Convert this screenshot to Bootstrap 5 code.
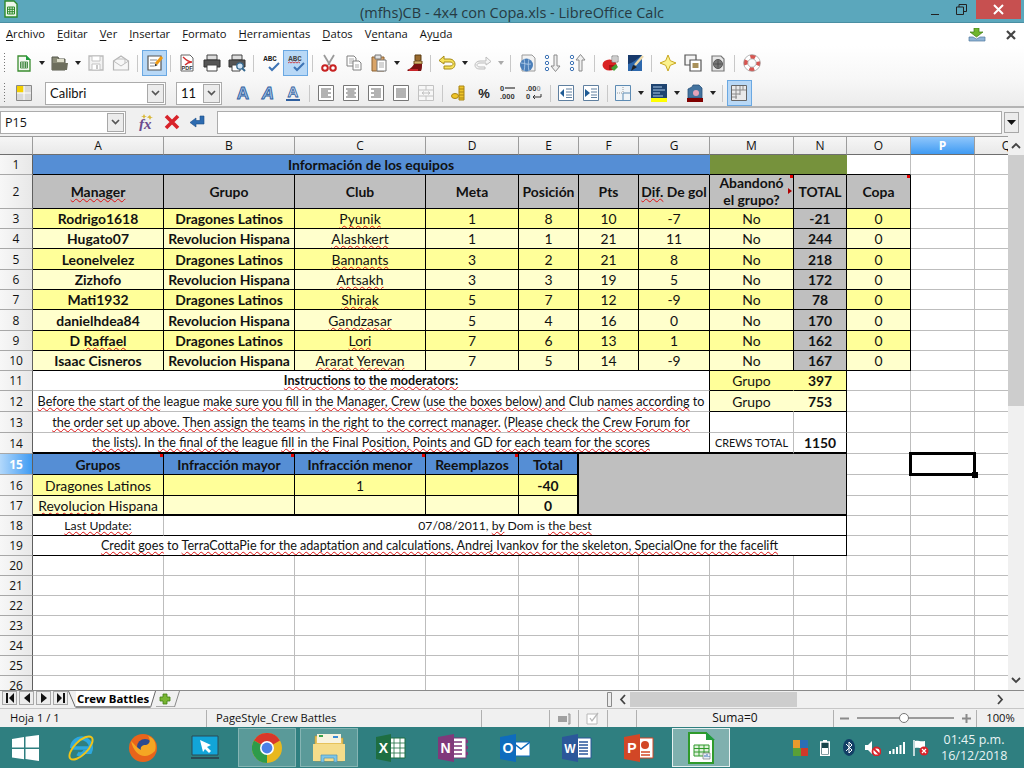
<!DOCTYPE html>
<html lang="es">
<head>
<meta charset="UTF-8">
<title>(mfhs)CB - 4x4 con Copa.xls - LibreOffice Calc</title>
<link href="https://cdn.jsdelivr.net/npm/bootstrap@5.3.0/dist/css/bootstrap.min.css" rel="stylesheet">
<style>
  html, body { margin: 0; background: #f0f0f0; overflow: hidden; }
  body { font-family: "Open Sans", "Noto Sans", sans-serif; font-size: 11.2px; color: #111; }
  svg { display: block; flex: none; }
  .app-win { width: 1024px; height: 768px; }

  .title-bar { height: 23px; background: #5ba7bc; border-bottom: 1px solid #4a8fa3; font-size: 14.5px; color: #263a42; }
  .title-text { left: 0; right: 0; top: 2px; text-align: center; }
  .win-btn { width: 27px; height: 19px; }
  .win-close { width: 45px; height: 19px; background: #c75050; margin: 0 3px 0 1px; }
  .menu-bar { height: 23px; background: #fff; padding-left: 6px; gap: 12px; font-size: 11.2px; }
  .menu-bar u { text-underline-offset: 2px; }
  .tool-a { height: 34px; background: linear-gradient(#fff, #f7f7f7); }
  .tool-b { height: 28px; background: linear-gradient(#f7f7f7, #ececec); border-bottom: 2px solid #b4b4b4; }
  .tb-grip { width: 11px; height: 20px; position: relative; }
  .tb-grip::before { content: ""; position: absolute; left: 4px; top: 0; width: 1px; height: 20px;
    background: repeating-linear-gradient(#777 0 1px, transparent 1px 3px); }
  .tb-b { width: 25px; height: 26px; display: flex; align-items: center; justify-content: center; }
  .tb-on { background: #b8d8f6; border: 1px solid #6aa8e2; }
  .tb-a { width: 11px; display: flex; justify-content: center; }
  .tb-a::before { content: ""; border: 3.5px solid transparent; border-top: 4px solid #222; border-bottom: 0; }
  .tb-a.is-off::before { border-top-color: #aaa; }
  .tb-s { width: 9px; height: 17px; display: flex; justify-content: center; }
  .tb-s::before { content: ""; width: 1px; background: #c8c8c8; }
  .tb-s7 { width: 7px; }
  .tb-s8 { width: 8px; }
  .tb-s6 { width: 6px; }
  .combo-box { height: 23px; background: #fff; border: 1px solid #acacac; padding-left: 4px; font-size: 13px; line-height: 21px; }
  .combo-font { width: 121px; margin-left: 9px; font-family: Lato, sans-serif; }
  .combo-size { width: 46px; margin: 0 8px 0 10px; font-family: Lato, sans-serif; }
  .combo-drop { width: 17px; height: 19px; margin: 1px; background: #ececec; border: 1px solid #a8a8a8; }

  .formula-bar { height: 28px; background: #f0f0f0; }
  .name-box { width: 126px; height: 23px; background: #fff; border: 1px solid #acacac; padding-left: 4px; line-height: 21px; font-size: 12.5px; }
  .formula-ic { width: 25px; }
  .formula-input { width: 785px; height: 23px; background: #fff; border: 1px solid #acacac; margin-left: 8px; }
  .formula-drop { width: 15px; height: 21px; margin-left: 2px; background: #ececec; border: 1px solid #a8a8a8; }

  .sheet-wrap { height: 554px; }
  .sheet-view { width: 1008px; height: 554px; overflow: hidden; background: #fff; }
  .sheet-tbl { table-layout: fixed; width: 1039px; border-collapse: separate; border-spacing: 0;
    font-family: Lato, sans-serif; font-size: 13.9px; color: #111; }
  .sheet-tbl td, .sheet-tbl th { height: 20px; padding: 0; text-align: center; vertical-align: middle; white-space: nowrap;
    overflow: hidden; line-height: 15px; font-weight: 400; border-right: 1px solid #bdbdbd; border-bottom: 1px solid #bdbdbd; }
  .sheet-tbl tr.row-21 td, .sheet-tbl tr.row-21 th { height: 21px; }
  .sheet-tbl tr.row-34 td, .sheet-tbl tr.row-34 th { height: 34px; }
  .sheet-tbl .col-head th { height: 19px; background: linear-gradient(#f6f6f6, #e9e9e9); border-top: 1px solid #9c9c9c;
    border-right-color: #9c9c9c; border-bottom-color: #6e6e6e; font-family: "Open Sans", sans-serif; font-size: 12px; }
  .sheet-tbl .row-head { background: linear-gradient(90deg, #f7f7f7, #e8e8e8); border-right: 1px solid #5f5f5f;
    border-bottom-color: #a8a8a8; font-family: "Open Sans", sans-serif; font-size: 12px; }
  .sheet-tbl .col-head .is-cur { background: linear-gradient(#8fc6fb, #3f9bf3); color: #fff; font-weight: 700; }
  .sheet-tbl .row-head.is-cur { background: linear-gradient(90deg, #b2d8fb, #3f9bf3); color: #fff; font-weight: 700; }

  .sheet-tbl td.ln { border-right-color: #000; border-bottom-color: #000; }
  .sheet-tbl td.lr { border-right-color: #000; }
  .sheet-tbl td.lb { border-bottom-color: #000; }
  .sheet-tbl td.thick-b { border-bottom: 2px solid #000; }
  .sheet-tbl td.thick-r { border-right: 2px solid #000; }
  .sheet-tbl td.b { font-weight: 700; }
  .sheet-tbl td.two-line { line-height: 16.500px; }
  .sheet-tbl td.note-txt { font-size: 12.6px; }
  .sheet-tbl td.note-sm { font-size: 12.2px; }
  .sheet-tbl td.small-cell { font-size: 10.9px; }
  .c-blue { background: #558ed5; }
  .c-olive { background: #76923c; }
  .c-gray { background: #bfbfbf; }
  .c-y1 { background: #ffff99; }
  .c-y2 { background: #ffffcc; }
  .sheet-tbl td.no-r1 { border-right-color: #ffff99; }
  .sheet-tbl td.no-r2 { border-right-color: #ffffcc; }
  .sheet-tbl td.edge-blue { border-right-color: #558ed5; }
  .sheet-tbl td.edge-olive { border-right-color: #76923c; }
  .sp { text-decoration: underline wavy #e01010 1px; text-underline-offset: 1px; text-decoration-skip-ink: none; }
  .has-note, .has-arrow { position: relative; }
  .has-note::after { content: ""; position: absolute; right: 0; top: 0; width: 3px; height: 3px; background: #e00000; }
  .has-arrow::before { content: ""; position: absolute; right: 1px; top: 13px; border: 3px solid transparent; border-left: 4px solid #b00000; border-right: 0; }
  .sheet-tbl td.cell-cursor { overflow: visible; position: relative; }
  .cell-cursor::after { content: ""; position: absolute; left: -2px; top: -2px; right: -2px; bottom: -2px; border: 3px solid #000; }
  .cell-cursor::before { content: ""; position: absolute; right: -4px; bottom: -4px; width: 6px; height: 6px; background: #000; z-index: 1; }

  .vscroll { width: 16px; background: #f0f0f0; }
  .vscroll-btn { height: 19px; }
  .vscroll-thumb { height: 251px; background: #cdcdcd; }

  .tab-bar { height: 18px; background: #f0f0f0; border-top: 1px solid #8a8a8a; }
  .tab-nav { width: 15px; height: 14px; margin-left: 2px; background: #ececec; border: 1px solid #a8a8a8; }
  .tab-name { font-weight: 700; font-size: 11.4px; width: 74px; white-space: nowrap; text-align: center; height: 17px; line-height: 15px; background: #fff; border-bottom: 2px solid #8a8a8a; color: #000; }
  .tab-add { height: 16px; width: 18px; background: #f0f0f0; border-bottom: 1px solid #aaa; }
  .hscroll { width: 417px; height: 17px; margin-left: auto; flex: none; padding-right: 20px; }
  .hscroll-left { margin: 0 3px 0 7px; }
  .hscroll-thumb { width: 167px; height: 15px; flex: none; background: #cdcdcd; margin-right: auto; }

  .status-bar { height: 19px; background: #f0f0f0; border-top: 1px solid #c6c6c6; font-size: 11.2px; }
  .st-cell { height: 17px; border-right: 1px solid #b0b0b0; line-height: 16px; flex: none; }
  .st-w1 { width: 207px; padding-left: 10px; }
  .st-w2 { width: 275px; padding-left: 9px; }
  .st-w3 { width: 68px; }
  .st-w4 { width: 29px; }
  .st-w5 { width: 197px; font-size: 12px; }
  .st-w6 { width: 143px; }
  .zoom-track { width: 97px; height: 2px; background: #9b9b9b; position: relative; }
  .zoom-knob { position: absolute; left: 42px; top: -4px; width: 10px; height: 10px; border-radius: 50%; background: #fff; border: 1px solid #777; }

  .task-bar { height: 41px; background: #2f7f80; color: #fff; }
  .task-start { width: 50px; }
  .task-item { width: 62px; height: 39px; display: flex; align-items: center; justify-content: center; }
  .task-open { background: #5a9a99; border: 1px solid #86b5b4; width: 58px; margin: 0 2px; }
  .task-current { background: #7fb0ae; border: 1px solid #e6f0f0; width: 58px; margin: 0 2px; }
  .tray-ic { width: 24px; display: flex; justify-content: center; }
  .task-clock { width: 66px; font-size: 12.5px; line-height: 16px; text-align: center; margin: 0 17px 0 8px; color: #e8f4f4; white-space: nowrap; }
</style>
</head>
<body>
<div class="app-win d-flex flex-column">

  <!-- title bar -->
  <div class="title-bar d-flex align-items-start position-relative">
    <svg class="ms-1 position-relative" width="14" height="18" viewBox="0 0 14 18"><path d="M1 1h9l3 3v13H1z" fill="#eef7ea" stroke="#2f8a2b" stroke-width="1.4"/><path d="M3.5 7h7v7h-7zM3.5 9.3h7M3.5 11.7h7M5.8 7v7M8.2 7v7" fill="none" stroke="#2f8a2b"/></svg>
    <div class="title-text position-absolute">(mfhs)CB - 4x4 con Copa.xls - LibreOffice Calc</div>
    <div class="ms-auto d-flex position-relative">
      <div class="win-btn d-flex align-items-center justify-content-center"><svg width="10" height="10" viewBox="0 0 10 10"><path d="M1 9h8v2H1z" fill="#222"/></svg></div>
      <div class="win-btn d-flex align-items-center justify-content-center"><svg width="11" height="11" viewBox="0 0 11 11"><path d="M.5 3h7v7.500h-7zM3 3V.5h7.500v7H8" fill="none" stroke="#222"/></svg></div>
      <div class="win-close d-flex align-items-center justify-content-center"><svg width="11" height="11" viewBox="0 0 11 11"><path d="M1 1l9 9M10 1l-9 9" stroke="#fff" stroke-width="2"/></svg></div>
    </div>
  </div>

  <!-- menu -->
  <div class="menu-bar d-flex align-items-center">
    <span><u>A</u>rchivo</span><span><u>E</u>ditar</span><span><u>V</u>er</span><span><u>I</u>nsertar</span><span><u>F</u>ormato</span><span><u>H</u>erramientas</span><span><u>D</u>atos</span><span>V<u>e</u>ntana</span><span>Ay<u>u</u>da</span>
    <svg class="ms-auto" width="18" height="14" viewBox="0 0 18 14"><path d="M6 0h5v4h4l-6.500 5L2 4h4z" fill="#6fb52c" stroke="#3d7a16" stroke-width=".7"/><path d="M1 9h4l3.500 2L12 9h5v4H1z" fill="#8fb4d6" stroke="#51799e" stroke-width=".7"/></svg>
    <svg class="ms-2 me-2" width="10" height="10" viewBox="0 0 10 10"><path d="M1 1l8 8M9 1L1 9" stroke="#444" stroke-width="2.200"/></svg>
  </div>

  <!-- standard toolbar -->
  <div class="tool-a d-flex align-items-center">
    <div class="tb-grip"></div>
    <div class="tb-b"><svg width="18" height="18" viewBox="0 0 18 18"><path d="M3 2h8l4 4v11H3z" fill="#f4f9f2" stroke="#3a8c2f" stroke-width="1.300"/><path d="M11 1l5 5h-5z" fill="#1f9c3c"/><path d="M5.500 8h7v6h-7zM5.500 10h7M5.500 12h7M8 8v6M10.500 8v6" fill="none" stroke="#2b7a2b" stroke-width=".8"/></svg></div>
    <div class="tb-a"></div>
    <div class="tb-b"><svg width="18" height="18" viewBox="0 0 18 18"><path d="M1 3h6l1 2h6v11H1z" fill="#8b8c78" stroke="#55564a"/><path d="M6 5h7v3H6z" fill="#dedecb"/><path d="M1 9h16l-1 7H1z" fill="#6d6e5d"/></svg></div>
    <div class="tb-a"></div>
    <div class="tb-b"><svg width="18" height="18" viewBox="0 0 18 18"><path d="M2 2h14v14H2z" fill="#f2f2f2" stroke="#bbb" stroke-width="1.300"/><path d="M5 2h8v5H5zM5 10h8v6H5z" fill="#fff" stroke="#c4c4c4"/><path d="M9 11h2v4H9z" fill="#c8c8c8"/></svg></div>
    <div class="tb-b"><svg width="18" height="18" viewBox="0 0 18 18"><path d="M1.500 7L9 2l7.500 5v9h-15z" fill="#f7f7f7" stroke="#b5b5b5" stroke-width="1.200"/><path d="M1.500 7L9 12l7.500-5M5 5h8v4" fill="none" stroke="#bdbdbd"/></svg></div>
    <div class="tb-s"></div>
    <div class="tb-b tb-on"><svg width="18" height="18" viewBox="0 0 18 18"><path d="M2 2h13v14H2z" fill="#fff" stroke="#555" stroke-width="1.200"/><path d="M4 6h7M4 9h5M4 12h4" stroke="#888"/><path d="M16 3l-6 7" stroke="#ef9a13" stroke-width="3"/><path d="M8.500 12.500l.8-3 2.200 1.800z" fill="#333"/></svg></div>
    <div class="tb-s tb-s7"></div>
    <div class="tb-b"><svg width="18" height="18" viewBox="0 0 18 18"><path d="M3 1h9l3 3v13H3z" fill="#fff" stroke="#666"/><path d="M5 3c3 3 6 5 9 5-3 0-5 1-7 3" fill="none" stroke="#d23030" stroke-width="1.300"/><text x="9" y="16" text-anchor="middle" font-family="Liberation Sans" font-weight="700" font-size="5.500" fill="#333">PDF</text></svg></div>
    <div class="tb-b"><svg width="18" height="18" viewBox="0 0 18 18"><path d="M4 1h10v5H4z" fill="#ddd" stroke="#444"/><path d="M1 6h16v7H1z" fill="#555" stroke="#333"/><path d="M4 11h10v6H4z" fill="#fff" stroke="#444"/></svg></div>
    <div class="tb-b"><svg width="18" height="18" viewBox="0 0 18 18"><path d="M4 1h10v5H4z" fill="#ddd" stroke="#444"/><path d="M1 6h16v7H1z" fill="#555" stroke="#333"/><path d="M4 11h8v6H4z" fill="#fff" stroke="#444"/><circle cx="12" cy="12" r="3.200" fill="#cfe4f6" stroke="#34688f" stroke-width="1.300"/><path d="M14 14l3 3" stroke="#34688f" stroke-width="2"/></svg></div>
    <div class="tb-s"></div>
    <div class="tb-b"><svg width="20" height="18" viewBox="0 0 20 18"><text x="9" y="7" text-anchor="middle" font-family="Liberation Mono" font-weight="700" font-size="7.500" fill="#222">ABC</text><path d="M8 13l3 3 7-7" fill="none" stroke="#3d73b5" stroke-width="2"/></svg></div>
    <div class="tb-b tb-on"><svg width="20" height="18" viewBox="0 0 20 18"><text x="9" y="7" text-anchor="middle" font-family="Liberation Mono" font-weight="700" font-size="7.500" fill="#444">ABC</text><path d="M2 9l1.500-1 1.500 1 1.500-1 1.500 1 1.500-1 1.500 1 1.500-1 1.500 1" fill="none" stroke="#d02020" stroke-width=".8"/><path d="M8 13l3 3 7-7" fill="none" stroke="#3d73b5" stroke-width="2"/></svg></div>
    <div class="tb-s tb-s8"></div>
    <div class="tb-b"><svg width="18" height="18" viewBox="0 0 18 18"><path d="M4 1l6 10M14 1L8 11" stroke="#9a9a9a" stroke-width="1.800"/><circle cx="5" cy="14" r="2.800" fill="#fff" stroke="#c72222" stroke-width="2"/><circle cx="13" cy="14" r="2.800" fill="#fff" stroke="#c72222" stroke-width="2"/></svg></div>
    <div class="tb-b"><svg width="18" height="18" viewBox="0 0 18 18"><path d="M2 2h7l2 2v8H2z" fill="#fff" stroke="#808080"/><path d="M4 5h5M4 7h5M4 9h5" stroke="#aaa"/><path d="M8 7h6l2 2v7H8z" fill="#fff" stroke="#808080"/><path d="M10 11h4M10 13h4" stroke="#aaa"/></svg></div>
    <div class="tb-b"><svg width="18" height="18" viewBox="0 0 18 18"><path d="M2 3h12v14H2z" fill="#d9a468" stroke="#8a6030"/><path d="M5 1h6v4H5z" fill="#e3e3e3" stroke="#777"/><path d="M7 6h9v11H7z" fill="#fff" stroke="#777"/><path d="M9 9h5M9 11h5M9 13h5" stroke="#aaa"/></svg></div>
    <div class="tb-a"></div>
    <div class="tb-b"><svg width="18" height="18" viewBox="0 0 18 18"><path d="M9 1h6v5l-3 2-3-2z" fill="#9a6b2f" stroke="#5b3c12"/><path d="M8 7h8v3H8z" fill="#d7b36c" stroke="#6f5222"/><path d="M1 16c2-1 4-1 7-6h8c0 3 0 5-1 7H2z" fill="#7a1212"/><path d="M3 15h9v2H3z" fill="#c9262b"/></svg></div>
    <div class="tb-s tb-s7"></div>
    <div class="tb-b"><svg width="18" height="18" viewBox="0 0 18 18"><path d="M6 2L1 6.500 6 10V8h6c2 0 3 1 3 2s-1 2-3 2H6v3h6c4 0 5-3 5-5s-2-5-5-5H6z" fill="#f7e35b" stroke="#a68a16"/></svg></div>
    <div class="tb-a"></div>
    <div class="tb-b"><svg width="18" height="18" viewBox="0 0 18 18"><path d="M12 3l5 4.500L12 11V9H6c-2 0-3 1-3 2s1 2 3 2h5v2H6c-4 0-5-2-5-4s2-4 5-4h6z" fill="#f4f4f4" stroke="#bdbdbd"/></svg></div>
    <div class="tb-a is-off"></div>
    <div class="tb-s"></div>
    <div class="tb-b"><svg width="18" height="18" viewBox="0 0 18 18"><path d="M3 1h10l3 3v13H3z" fill="#f2f2f2" stroke="#9a9a9a"/><circle cx="7.500" cy="11" r="6.500" fill="#4b7fb9"/><path d="M2 9c3 0 6 2 10 1M5 5c1 3 1 8 0 12M10 5c-1 3-1 8 0 12" fill="none" stroke="#b9d3ec" stroke-width=".8"/></svg></div>
    <div class="tb-b"><svg width="18" height="18" viewBox="0 0 18 18"><circle cx="3" cy="3" r="1.700" fill="#fff" stroke="#3d73b5"/><circle cx="3" cy="9" r="1.700" fill="#fff" stroke="#3d73b5"/><circle cx="3" cy="15" r="1.700" fill="#fff" stroke="#3d73b5"/><path d="M10 1h3v11h3l-4.500 5.500L7 12h3z" fill="#f0f0f0" stroke="#8a8a8a"/></svg></div>
    <div class="tb-b"><svg width="18" height="18" viewBox="0 0 18 18"><circle cx="3" cy="3" r="1.700" fill="#fff" stroke="#3d73b5"/><circle cx="3" cy="9" r="1.700" fill="#fff" stroke="#3d73b5"/><circle cx="3" cy="15" r="1.700" fill="#fff" stroke="#3d73b5"/><path d="M10 17h3V6h3L11.500.5 7 6h3z" fill="#f0f0f0" stroke="#8a8a8a"/></svg></div>
    <div class="tb-s tb-s8"></div>
    <div class="tb-b"><svg width="18" height="18" viewBox="0 0 18 18"><ellipse cx="7.500" cy="11" rx="7" ry="5.500" fill="#d92222"/><path d="M7 16c4 0 8-2 8-5H7z" fill="#a81414"/><path d="M9 14l5-4 2 3-4 4z" fill="#45a035"/><path d="M10 2h6v6h-6z" fill="#fff" stroke="#888"/><path d="M11 4h4M11 6h4" stroke="#999"/></svg></div>
    <div class="tb-b"><svg width="18" height="18" viewBox="0 0 18 18"><path d="M1 1h14v16H1z" fill="#17396b"/><path d="M1 17V10c5-1 9-5 14-9v16z" fill="#2d68ad"/><path d="M16 2l-8 9" stroke="#eed9a8" stroke-width="2.500"/><path d="M4 17l2-6 4 2z" fill="#222"/></svg></div>
    <div class="tb-s tb-s7"></div>
    <div class="tb-b"><svg width="18" height="18" viewBox="0 0 18 18"><path d="M9 1l2.300 5.700L17 9l-5.700 2.300L9 17l-2.300-5.700L1 9l5.700-2.300z" fill="#fbf28e" stroke="#c9a720"/></svg></div>
    <div class="tb-b"><svg width="18" height="18" viewBox="0 0 18 18"><path d="M1 1h11v10H1z" fill="#f4f4f4" stroke="#555" stroke-width="1.200"/><path d="M6 6h11v11H6z" fill="#fff" stroke="#555" stroke-width="1.200"/><path d="M8.500 9h6v5h-6z" fill="#a8905a"/></svg></div>
    <div class="tb-b"><svg width="18" height="18" viewBox="0 0 18 18"><path d="M3 2h9l3 3v12H3z" fill="#e6e6e6" stroke="#777" stroke-width="1.200"/><circle cx="9" cy="10" r="4.500" fill="#777" stroke="#555"/><path d="M9 6.500v7M5.500 10h7" stroke="#444" stroke-width=".7"/></svg></div>
    <div class="tb-s"></div>
    <div class="tb-b"><svg width="18" height="18" viewBox="0 0 18 18"><circle cx="9" cy="9" r="6.300" fill="none" stroke="#fff" stroke-width="4"/><circle cx="9" cy="9" r="6.300" fill="none" stroke="#d95550" stroke-width="4" stroke-dasharray="5 4.900" stroke-dashoffset="2.500"/><circle cx="9" cy="9" r="8.300" fill="none" stroke="#9a9a9a" stroke-width=".7"/><circle cx="9" cy="9" r="4.200" fill="none" stroke="#9a9a9a" stroke-width=".7"/></svg></div>
  </div>

  <!-- formatting toolbar -->
  <div class="tool-b d-flex align-items-center">
    <div class="tb-grip"></div>
    <div class="tb-b"><svg width="16" height="16" viewBox="0 0 16 16"><path d="M.5.500h15v15H.5z" fill="#d8d8d8" stroke="#888"/><path d="M1 1h6.500v6.500H1z" fill="#f4d000"/><path d="M8 1v14M1 8h14" stroke="#fff"/></svg></div>
    <div class="combo-box combo-font d-flex justify-content-between">Calibri<div class="combo-drop d-flex align-items-center justify-content-center"><svg width="9" height="6" viewBox="0 0 9 6"><path d="M1 1l3.500 3.500L8 1" fill="none" stroke="#555" stroke-width="1.700"/></svg></div></div>
    <div class="combo-box combo-size d-flex justify-content-between">11<div class="combo-drop d-flex align-items-center justify-content-center"><svg width="9" height="6" viewBox="0 0 9 6"><path d="M1 1l3.500 3.500L8 1" fill="none" stroke="#555" stroke-width="1.700"/></svg></div></div>
    <div class="tb-b"><svg width="20" height="18" viewBox="0 0 20 18"><text x="10" y="15" text-anchor="middle" font-family="Liberation Sans" font-weight="700" font-size="17" fill="#9dc0e6" stroke="#2f5f9f" stroke-width=".9">A</text></svg></div>
    <div class="tb-b"><svg width="20" height="18" viewBox="0 0 20 18"><text x="10" y="15" text-anchor="middle" font-family="Liberation Sans" font-weight="700" font-style="italic" font-size="17" fill="#9dc0e6" stroke="#2f5f9f" stroke-width=".9">A</text></svg></div>
    <div class="tb-b"><svg width="20" height="18" viewBox="0 0 20 18"><text x="10" y="13" text-anchor="middle" font-family="Liberation Sans" font-weight="700" font-size="15" fill="#cfe0f2" stroke="#2f5f9f" stroke-width=".8">A</text><path d="M3 16h14" stroke="#2f5f9f" stroke-width="2"/></svg></div>
    <div class="tb-s tb-s8"></div>
    <div class="tb-b"><svg width="18" height="16" viewBox="0 0 18 16"><path d="M1.500.500h15v15h-15z" fill="#fff" stroke="#777"/><path d="M4 4h10M4 6h7M4 8h10M4 10h7M4 12h10" stroke="#666"/></svg></div>
    <div class="tb-b"><svg width="18" height="16" viewBox="0 0 18 16"><path d="M1.500.500h15v15h-15z" fill="#fff" stroke="#777"/><path d="M4 4h10M5.500 6h7M4 8h10M5.500 10h7M4 12h10" stroke="#666"/></svg></div>
    <div class="tb-b"><svg width="18" height="16" viewBox="0 0 18 16"><path d="M1.500.500h15v15h-15z" fill="#fff" stroke="#777"/><path d="M4 4h10M7 6h7M4 8h10M7 10h7M4 12h10" stroke="#666"/></svg></div>
    <div class="tb-b"><svg width="18" height="16" viewBox="0 0 18 16"><path d="M1.500.500h15v15h-15z" fill="#fff" stroke="#777"/><path d="M4 4h10M4 6h10M4 8h10M4 10h10M4 12h10" stroke="#666"/></svg></div>
    <div class="tb-b"><svg width="18" height="16" viewBox="0 0 18 16"><path d="M1.500.500h15v15h-15z" fill="#f7f7f7" stroke="#c2c2c2"/><path d="M2 5h14M2 11h14M9 1v4M9 11v4M5 8h8M5 8l2-1.500M5 8l2 1.500M13 8l-2-1.500M13 8l-2 1.500" fill="none" stroke="#c2c2c2"/></svg></div>
    <div class="tb-s tb-s8"></div>
    <div class="tb-b"><svg width="18" height="18" viewBox="0 0 18 18"><path d="M9 2h5v14H9z" fill="#efc428" stroke="#a98515"/><path d="M9 5h5M9 8h5M9 11h5M9 14h5" stroke="#a98515"/><ellipse cx="5" cy="12" rx="3.500" ry="2.500" fill="#efc428" stroke="#a98515"/></svg></div>
    <div class="tb-b"><svg width="18" height="14" viewBox="0 0 18 14"><text x="9" y="12" text-anchor="middle" font-family="Liberation Sans" font-weight="700" font-size="13" fill="#222">%</text></svg></div>
    <div class="tb-b"><svg width="20" height="18" viewBox="0 0 20 18"><text x="1" y="7" font-family="Liberation Sans" font-weight="700" font-size="7.500" fill="#333">0</text><path d="M6 4h10" stroke="#333" stroke-width="1.200"/><text x="1" y="15" font-family="Liberation Sans" font-weight="700" font-size="7.500" fill="#333">.000</text></svg></div>
    <div class="tb-b"><svg width="20" height="18" viewBox="0 0 20 18"><text x="2" y="7" font-family="Liberation Sans" font-weight="700" font-size="7.500" fill="#333">.00<tspan fill="#999">0</tspan></text><text x="2" y="15" font-family="Liberation Sans" font-weight="700" font-size="7.500" fill="#333">0</text><path d="M17 10v3H9M11 11l-2 2 2 2" fill="none" stroke="#333"/></svg></div>
    <div class="tb-s tb-s8"></div>
    <div class="tb-b"><svg width="17" height="16" viewBox="0 0 17 16"><path d="M.5.500h15v15H.5z" fill="#fff" stroke="#5f7f9f"/><path d="M8 4h6M8 7h6M8 10h6M8 12.500h6" stroke="#5f7f9f"/><path d="M6 4v8L2 8z" fill="#1e5a94"/></svg></div>
    <div class="tb-b"><svg width="17" height="16" viewBox="0 0 17 16"><path d="M.5.500h15v15H.5z" fill="#fff" stroke="#5f7f9f"/><path d="M8 4h6M8 7h6M8 10h6M8 12.500h6" stroke="#5f7f9f"/><path d="M2 4v8l5-4z" fill="#1e5a94"/></svg></div>
    <div class="tb-s tb-s6"></div>
    <div class="tb-b"><svg width="16" height="16" viewBox="0 0 16 16"><path d="M.5.500h15v15H.5z" fill="#f1f5f8" stroke="#5d8bb3"/><path d="M8 2v5M2 8h5" stroke="#999" stroke-dasharray="1 1"/><path d="M8 8h7M8 8v7" stroke="#5d8bb3"/></svg></div>
    <div class="tb-a"></div>
    <div class="tb-b"><svg width="16" height="18" viewBox="0 0 16 18"><path d="M0 0h16v14H0z" fill="#1f4470"/><path d="M2 3h9M2 6h12M2 9h7M2 12h10" stroke="#a9c7e6"/><path d="M0 14h16v4H0z" fill="#ffff00"/></svg></div>
    <div class="tb-a"></div>
    <div class="tb-b"><svg width="16" height="18" viewBox="0 0 16 18"><path d="M1 5l4-2 1-2h6l3 3v10H1z" fill="#43739f" stroke="#28507a" stroke-width=".8"/><circle cx="9" cy="9" r="3" fill="#e6a2b8"/><path d="M0 14h16v4H0z" fill="#800000"/></svg></div>
    <div class="tb-a"></div>
    <div class="tb-s"></div>
    <div class="tb-b tb-on"><svg width="17" height="16" viewBox="0 0 17 16"><path d="M.5.500h15v15H.5z" fill="#e9e9e9" stroke="#666"/><path d="M1 5h14M1 9h8M1 12h5M5 1v13M9 1v9M12 1v4" stroke="#8a8a8a"/></svg></div>
  </div>

  <!-- formula bar -->
  <div class="formula-bar d-flex align-items-center">
    <div class="name-box d-flex justify-content-between">P15<div class="combo-drop d-flex align-items-center justify-content-center"><svg width="9" height="6" viewBox="0 0 9 6"><path d="M1 1l3.500 3.500L8 1" fill="none" stroke="#555" stroke-width="1.700"/></svg></div></div>
    <div class="formula-ic ms-2 d-flex justify-content-center"><svg width="18" height="18" viewBox="0 0 18 18"><text x="1" y="16" font-family="Liberation Serif" font-style="italic" font-weight="700" font-size="15" fill="#6b4a8e">fx</text><path d="M5 3l1-2 1 2 2 .5-2 .5-1 2-1-2-2-.5zM12 2l1 2 2 .5-2 .5-1 2-1-2-2-.5z" fill="#d9b83a"/></svg></div>
    <div class="formula-ic d-flex justify-content-center"><svg width="16" height="16" viewBox="0 0 16 16"><path d="M2 2l12 12M14 2L2 14" stroke="#d8232a" stroke-width="3.600"/></svg></div>
    <div class="formula-ic d-flex justify-content-center"><svg width="16" height="14" viewBox="0 0 16 14"><path d="M11 1h4v8H7v3L1 7.500 7 3v2.500h4z" fill="#2d6bb0" stroke="#1d4d86" stroke-width=".6"/></svg></div>
    <div class="formula-input"></div>
    <div class="formula-drop d-flex align-items-center justify-content-center"><svg width="9" height="5" viewBox="0 0 9 5"><path d="M0 0h9L4.500 5z" fill="#111"/></svg></div>
  </div>

  <!-- sheet -->
  <div class="sheet-wrap d-flex">
    <div class="sheet-view">
      <table class="sheet-tbl">
        <colgroup><col width="33"><col width="131"><col width="131"><col width="131"><col width="93"><col width="60"><col width="60"><col width="71"><col width="84"><col width="53"><col width="64"><col width="64"><col width="64"></colgroup>
        <tr class="col-head"><th></th><th>A</th><th>B</th><th>C</th><th>D</th><th>E</th><th>F</th><th>G</th><th>M</th><th>N</th><th>O</th><th class="is-cur">P</th><th>Q</th></tr>
        <tr><th class="row-head">1</th><td colspan="7" class="b c-blue lb edge-blue">Información de los equipos</td><td colspan="2" class="c-olive lb edge-olive"></td><td class="lb"></td><td></td><td></td></tr>
        <tr class="row-34"><th class="row-head">2</th><td class="ln b c-gray"><span class="sp">Manager</span></td><td class="ln b c-gray">Grupo</td><td class="ln b c-gray">Club</td><td class="ln b c-gray">Meta</td><td class="ln b c-gray">Posición</td><td class="ln b c-gray">Pts</td><td class="ln b c-gray"><span class="sp">Dif.</span> De gol</td><td class="ln b c-gray two-line has-note has-arrow">Abandonó<br>el grupo?</td><td class="ln b c-gray">TOTAL</td><td class="ln b c-gray has-note">Copa</td><td></td><td></td></tr>
        <tr><th class="row-head">3</th><td class="ln b c-y1">Rodrigo1618</td><td class="ln b c-y1">Dragones Latinos</td><td class="ln c-y1"><span class="sp">Pyunik</span></td><td class="ln c-y1">1</td><td class="ln c-y1">8</td><td class="ln c-y1">10</td><td class="ln c-y1">-7</td><td class="ln c-y1">No</td><td class="ln b c-gray">-21</td><td class="ln c-y1">0</td><td></td><td></td></tr>
        <tr><th class="row-head">4</th><td class="ln b c-y2">Hugato07</td><td class="ln b c-y2">Revolucion Hispana</td><td class="ln c-y2"><span class="sp">Alashkert</span></td><td class="ln c-y2">1</td><td class="ln c-y2">1</td><td class="ln c-y2">21</td><td class="ln c-y2">11</td><td class="ln c-y2">No</td><td class="ln b c-gray">244</td><td class="ln c-y2">0</td><td></td><td></td></tr>
        <tr class="row-21"><th class="row-head">5</th><td class="ln b c-y1">Leonelvelez</td><td class="ln b c-y1">Dragones Latinos</td><td class="ln c-y1"><span class="sp">Bannants</span></td><td class="ln c-y1">3</td><td class="ln c-y1">2</td><td class="ln c-y1">21</td><td class="ln c-y1">8</td><td class="ln c-y1">No</td><td class="ln b c-gray">218</td><td class="ln c-y1">0</td><td></td><td></td></tr>
        <tr><th class="row-head">6</th><td class="ln b c-y2">Zizhofo</td><td class="ln b c-y2">Revolucion Hispana</td><td class="ln c-y2"><span class="sp">Artsakh</span></td><td class="ln c-y2">3</td><td class="ln c-y2">3</td><td class="ln c-y2">19</td><td class="ln c-y2">5</td><td class="ln c-y2">No</td><td class="ln b c-gray">172</td><td class="ln c-y2">0</td><td></td><td></td></tr>
        <tr><th class="row-head">7</th><td class="ln b c-y1">Mati1932</td><td class="ln b c-y1">Dragones Latinos</td><td class="ln c-y1"><span class="sp">Shirak</span></td><td class="ln c-y1">5</td><td class="ln c-y1">7</td><td class="ln c-y1">12</td><td class="ln c-y1">-9</td><td class="ln c-y1">No</td><td class="ln b c-gray">78</td><td class="ln c-y1">0</td><td></td><td></td></tr>
        <tr class="row-21"><th class="row-head">8</th><td class="ln b c-y2">danielhdea84</td><td class="ln b c-y2">Revolucion Hispana</td><td class="ln c-y2"><span class="sp">Gandzasar</span></td><td class="ln c-y2">5</td><td class="ln c-y2">4</td><td class="ln c-y2">16</td><td class="ln c-y2">0</td><td class="ln c-y2">No</td><td class="ln b c-gray">170</td><td class="ln c-y2">0</td><td></td><td></td></tr>
        <tr><th class="row-head">9</th><td class="ln b c-y1">D <span class="sp">Raffael</span></td><td class="ln b c-y1">Dragones Latinos</td><td class="ln c-y1"><span class="sp">Lori</span></td><td class="ln c-y1">7</td><td class="ln c-y1">6</td><td class="ln c-y1">13</td><td class="ln c-y1">1</td><td class="ln c-y1">No</td><td class="ln b c-gray">162</td><td class="ln c-y1">0</td><td></td><td></td></tr>
        <tr><th class="row-head">10</th><td class="ln b c-y2">Isaac Cisneros</td><td class="ln b c-y2">Revolucion Hispana</td><td class="ln c-y2"><span class="sp">Ararat Yerevan</span></td><td class="ln c-y2">7</td><td class="ln c-y2">5</td><td class="ln c-y2">14</td><td class="ln c-y2">-9</td><td class="ln c-y2">No</td><td class="ln b c-gray">167</td><td class="ln c-y2">0</td><td></td><td></td></tr>
        <tr><th class="row-head">11</th><td colspan="7" class="lr b note-txt"><span class="sp">Instructions</span> <span class="sp">to</span> <span class="sp">the</span> <span class="sp">moderators:</span></td><td class="c-y1 lb no-r1">Grupo</td><td class="c-y1 ln b">397</td><td></td><td></td><td></td></tr>
        <tr class="row-21"><th class="row-head">12</th><td colspan="7" class="lr note-txt"><span class="sp">Before the start of the</span> league <span class="sp">make sure you fill</span> in <span class="sp">the Manager, Crew</span> (<span class="sp">use the boxes below) and</span> Club <span class="sp">names according</span> to</td><td class="c-y2 lb no-r2">Grupo</td><td class="c-y2 ln b">753</td><td></td><td></td><td></td></tr>
        <tr class="row-21"><th class="row-head">13</th><td colspan="7" class="lr note-txt"><span class="sp">the order set up above. Then assign the teams</span> in <span class="sp">the right</span> to <span class="sp">the correct manager.</span> (<span class="sp">Please check the Crew Forum for</span></td><td></td><td class="lr"></td><td></td><td></td><td></td></tr>
        <tr class="row-21"><th class="row-head">14</th><td colspan="7" class="lr thick-b note-txt"><span class="sp">the lists</span>). In <span class="sp">the final of the</span> league <span class="sp">fill</span> in <span class="sp">the</span> Final <span class="sp">Position, Points and</span> GD <span class="sp">for each team for the scores</span></td><td class="small-cell thick-b">CREWS TOTAL</td><td class="lr b thick-b">1150</td><td></td><td></td><td></td></tr>
        <tr class="row-21"><th class="row-head is-cur">15</th><td class="ln b c-blue has-note">Grupos</td><td class="ln b c-blue has-note">Infracción mayor</td><td class="ln b c-blue has-note">Infracción menor</td><td class="ln b c-blue has-note">Reemplazos</td><td class="lb thick-r b c-blue">Total</td><td colspan="4" rowspan="3" class="c-gray lr thick-b"></td><td></td><td class="cell-cursor"></td><td></td></tr>
        <tr class="row-21"><th class="row-head">16</th><td class="ln c-y1">Dragones Latinos</td><td class="ln c-y1"></td><td class="ln c-y1">1</td><td class="ln c-y1"></td><td class="lb thick-r b c-y1">-40</td><td></td><td></td><td></td></tr>
        <tr><th class="row-head">17</th><td class="lr thick-b c-y2"><span class="sp">Revolucion</span> Hispana</td><td class="lr thick-b c-y2"></td><td class="lr thick-b c-y2"></td><td class="lr thick-b c-y2"></td><td class="thick-r thick-b b c-y2">0</td><td></td><td></td><td></td></tr>
        <tr><th class="row-head">18</th><td class="lb note-sm"><span class="sp">Last Update:</span></td><td colspan="8" class="ln note-sm">07/08/2011, <span class="sp">by</span> Dom is <span class="sp">the best</span></td><td></td><td></td><td></td></tr>
        <tr><th class="row-head">19</th><td colspan="9" class="ln note-txt"><span class="sp">Credit goes</span> to <span class="sp">TerraCottaPie for the adaptation and calculations, Andrej Ivankov for the skeleton, SpecialOne for the facelift</span></td><td></td><td></td><td></td></tr>
        <tr><th class="row-head">20</th><td></td><td></td><td></td><td></td><td></td><td></td><td></td><td></td><td></td><td></td><td></td><td></td></tr>
        <tr><th class="row-head">21</th><td></td><td></td><td></td><td></td><td></td><td></td><td></td><td></td><td></td><td></td><td></td><td></td></tr>
        <tr><th class="row-head">22</th><td></td><td></td><td></td><td></td><td></td><td></td><td></td><td></td><td></td><td></td><td></td><td></td></tr>
        <tr><th class="row-head">23</th><td></td><td></td><td></td><td></td><td></td><td></td><td></td><td></td><td></td><td></td><td></td><td></td></tr>
        <tr><th class="row-head">24</th><td></td><td></td><td></td><td></td><td></td><td></td><td></td><td></td><td></td><td></td><td></td><td></td></tr>
        <tr><th class="row-head">25</th><td></td><td></td><td></td><td></td><td></td><td></td><td></td><td></td><td></td><td></td><td></td><td></td></tr>
        <tr><th class="row-head">26</th><td></td><td></td><td></td><td></td><td></td><td></td><td></td><td></td><td></td><td></td><td></td><td></td></tr>
      </table>
    </div>
    <div class="vscroll d-flex flex-column">
      <div class="vscroll-btn d-flex align-items-center justify-content-center"><svg width="10" height="7" viewBox="0 0 10 7"><path d="M1 6l4-4 4 4" fill="none" stroke="#444" stroke-width="1.800"/></svg></div>
      <div class="vscroll-thumb"></div>
      <div class="vscroll-btn d-flex align-items-center justify-content-center mt-auto"><svg width="10" height="7" viewBox="0 0 10 7"><path d="M1 1l4 4 4-4" fill="none" stroke="#444" stroke-width="1.800"/></svg></div>
    </div>
  </div>

  <!-- sheet tabs -->
  <div class="tab-bar d-flex align-items-start">
    <div class="tab-nav d-flex align-items-center justify-content-center"><svg width="8" height="10" viewBox="0 0 8 10"><path d="M0 0h2v10H0zM8 0v10L3 5z" fill="#111"/></svg></div>
    <div class="tab-nav d-flex align-items-center justify-content-center"><svg width="6" height="10" viewBox="0 0 6 10"><path d="M6 0v10L0 5z" fill="#111"/></svg></div>
    <div class="tab-nav d-flex align-items-center justify-content-center"><svg width="6" height="10" viewBox="0 0 6 10"><path d="M0 0v10l6-5z" fill="#111"/></svg></div>
    <div class="tab-nav d-flex align-items-center justify-content-center"><svg width="8" height="10" viewBox="0 0 8 10"><path d="M6 0h2v10H6zM0 0v10l5-5z" fill="#111"/></svg></div>
    <svg width="8" height="17" viewBox="0 0 8 17"><path d="M0 0h1l6 16h1v1H7z" fill="#fff"/><path d="M.5 0l7 16.500" stroke="#666"/></svg>
    <div class="tab-name">Crew Battles</div>
    <svg width="6" height="17" viewBox="0 0 6 17"><path d="M0 0h6L0 17z" fill="#fff"/><path d="M5.500 0L.5 16.500" stroke="#666"/></svg>
    <div class="tab-add d-flex align-items-center justify-content-center"><svg width="12" height="12" viewBox="0 0 12 12"><path d="M4 1h4v3h3v4H8v3H4V8H1V4h3z" fill="#78b533" stroke="#3f7d12" stroke-width=".8"/></svg></div>
    <svg width="6" height="16" viewBox="0 0 6 16"><path d="M5.500 0L.5 16" stroke="#888"/></svg>
    <div class="hscroll d-flex align-items-center">
      <svg width="5" height="15" viewBox="0 0 5 15"><path d="M.5.500h4v14h-4z" fill="#ececec" stroke="#8a8a8a"/></svg>
      <svg class="hscroll-left" width="8" height="11" viewBox="0 0 8 11"><path d="M6 1L2 5.500 6 10" fill="none" stroke="#444" stroke-width="1.800"/></svg>
      <div class="hscroll-thumb"></div>
      <svg width="8" height="11" viewBox="0 0 8 11"><path d="M2 1l4 4.500L2 10" fill="none" stroke="#444" stroke-width="1.800"/></svg>
    </div>
  </div>

  <!-- status bar -->
  <div class="status-bar d-flex align-items-center">
    <div class="st-cell st-w1">Hoja 1 / 1</div>
    <div class="st-cell st-w2">PageStyle_Crew Battles</div>
    <div class="st-cell st-w3"></div>
    <div class="st-cell st-w4 d-flex align-items-center justify-content-center"><svg width="13" height="13" viewBox="0 0 13 13"><path d="M0 4h9v6H0z" fill="#a0a0a0"/><path d="M10 2h2v10h-2M11 2v10" fill="none" stroke="#999"/></svg></div>
    <div class="st-cell st-w4 d-flex align-items-center justify-content-center"><svg width="14" height="14" viewBox="0 0 14 14"><path d="M1 3h10v10H1z" fill="#fff" stroke="#b8b8b8"/><path d="M4 7l2 3 6-8" fill="none" stroke="#b8b8b8" stroke-width="1.300"/></svg></div>
    <div class="st-cell st-w4"></div>
    <div class="st-cell st-w5 text-center">Suma=0</div>
    <div class="st-cell st-w6 d-flex align-items-center justify-content-center gap-2">
      <svg width="9" height="9" viewBox="0 0 9 9"><path d="M0 3.500h9v2H0z" fill="#8a8a8a"/></svg>
      <div class="zoom-track"><div class="zoom-knob"></div></div>
      <svg width="9" height="9" viewBox="0 0 9 9"><path d="M0 3.500h9v2H0zM3.500 0h2v9h-2z" fill="#8a8a8a"/></svg>
    </div>
    <div class="flex-grow-1 text-center">100%</div>
  </div>

  <!-- taskbar -->
  <div class="task-bar d-flex align-items-center">
    <div class="task-start d-flex justify-content-center"><svg width="27" height="26" viewBox="0 0 27 26"><path d="M0 4l12-2v10.500H0zM13.500 1.800L27 0v12.500H13.500zM0 14h12v10.200L0 22.500zM13.500 14H27v12l-13.500-2z" fill="#fff"/></svg></div>
    <div class="task-item"><svg width="32" height="32" viewBox="0 0 32 32"><path d="M7 16a9.500 9.500 0 1 1 18 4h-5.500a5 5 0 0 1-7 1.500" fill="none" stroke="#2ea8df" stroke-width="4"/><path d="M8 16h16" stroke="#2ea8df" stroke-width="3.500"/><ellipse cx="16" cy="16" rx="15" ry="6.500" transform="rotate(-45 16 16)" fill="none" stroke="#f0c419" stroke-width="2"/></svg></div>
    <div class="task-item"><svg width="30" height="30" viewBox="0 0 30 30"><circle cx="15" cy="15" r="14" fill="#e8641b"/><circle cx="17" cy="14" r="8" fill="#2b4a8f"/><path d="M3 8c3 14 14 20 24 10 2-6 0-13-7-15 3 4 2 8-2 9-4 0-6 2-5 5-4-2-6-5-10-9z" fill="#f5a623"/></svg></div>
    <div class="task-item"><svg width="28" height="26" viewBox="0 0 28 26"><path d="M1 1h26v19H1z" fill="#12a5d8" stroke="#2b4a55"/><path d="M0 22h28v2H0z" fill="#2b4a55"/><path d="M9 5l11 5-4 2 4 4-2 2-4-4-2 3z" fill="#fff"/></svg></div>
    <div class="task-item task-open"><svg width="30" height="30" viewBox="0 0 30 30"><circle cx="15" cy="15" r="15" fill="#e8b81e"/><path d="M15 15L2 7.500A15 15 0 0 1 28 7.500z" fill="#d8372b"/><path d="M15 15L2 7.500A15 15 0 0 0 15 30z" fill="#2e9b4a"/><circle cx="15" cy="15" r="7" fill="#fff"/><circle cx="15" cy="15" r="5.400" fill="#4a80e8"/></svg></div>
    <div class="task-item task-open"><svg width="32" height="30" viewBox="0 0 32 30"><path d="M2 3h10l2 2h16v23H2z" fill="#e7c25a" stroke="#b89232" stroke-width=".6"/><path d="M4 1h24v9H4z" fill="#f8f3df"/><path d="M6 2h4v2H6z" fill="#3ba34a"/><path d="M20 3h5v2h-5z" fill="#3b8bd6"/><path d="M0 11h32v17H0z" fill="#f5dc8a"/><path d="M8 22h16v7h-3v-4H11v4H8z" fill="#7fc6e6" stroke="#4a93b8" stroke-width=".7"/></svg></div>
    <div class="task-item"><svg width="30" height="28" viewBox="0 0 30 28"><path d="M12 4h17v20H12z" fill="#fff" stroke="#1e6e42"/><path d="M18 4v20M24 4v20M12 9h17M12 14h17M12 19h17" stroke="#1e6e42" stroke-width=".8"/><path d="M0 3l15-3v28L0 25z" fill="#1e6e42"/><text x="7.500" y="19" text-anchor="middle" font-family="Liberation Sans" font-weight="700" font-size="14" fill="#fff">X</text></svg></div>
    <div class="task-item"><svg width="30" height="28" viewBox="0 0 30 28"><path d="M12 4h16v20H12z" fill="#fff" stroke="#80397b"/><path d="M16 8h8M16 12h8M16 16h8M16 20h8" stroke="#80397b" stroke-width="1.500"/><path d="M28 6h2v3h-2zM28 12h2v3h-2zM28 18h2v3h-2z" fill="#80397b"/><path d="M0 3l16-3v28L0 25z" fill="#80397b"/><text x="7.500" y="19" text-anchor="middle" font-family="Liberation Sans" font-weight="700" font-size="14" fill="#fff">N</text></svg></div>
    <div class="task-item"><svg width="30" height="28" viewBox="0 0 30 28"><path d="M12 8h18v14H12z" fill="#fff" stroke="#0f6cbd"/><path d="M12 8l9 7 9-7" fill="none" stroke="#0f6cbd" stroke-width="1.500"/><path d="M0 3l16-3v28L0 25z" fill="#0f6cbd"/><text x="8" y="19" text-anchor="middle" font-family="Liberation Sans" font-weight="700" font-size="14" fill="#fff">O</text></svg></div>
    <div class="task-item"><svg width="30" height="28" viewBox="0 0 30 28"><path d="M12 4h17v20H12z" fill="#fff" stroke="#2b579a"/><path d="M17 8h9M17 11h9M17 14h9M17 17h9M17 20h9" stroke="#2b579a" stroke-width="1.300"/><path d="M0 3l16-3v28L0 25z" fill="#2b579a"/><text x="8" y="19" text-anchor="middle" font-family="Liberation Sans" font-weight="700" font-size="12" fill="#fff">W</text></svg></div>
    <div class="task-item"><svg width="30" height="28" viewBox="0 0 30 28"><path d="M12 4h17v20H12z" fill="#fff" stroke="#d24726"/><circle cx="21" cy="11" r="4" fill="#d24726"/><path d="M17 18h9M17 21h9" stroke="#d24726" stroke-width="1.300"/><path d="M0 3l16-3v28L0 25z" fill="#d24726"/><text x="8" y="19" text-anchor="middle" font-family="Liberation Sans" font-weight="700" font-size="14" fill="#fff">P</text></svg></div>
    <div class="task-item task-current"><svg width="28" height="32" viewBox="0 0 28 32"><path d="M2 1h17l7 7v23H2z" fill="#fff" stroke="#2f9a2b" stroke-width="2"/><path d="M19 0l9 8h-9z" fill="#1f9c3c"/><path d="M7 13h15v11H7zM7 16.500h15M7 20h15M12 13v11M17 13v11" fill="#e0f1dc" stroke="#2f9a2b"/><path d="M16 21h7v6h-7z" fill="#e8eef6" stroke="#7a7a7a" stroke-width=".7"/><path d="M18 25v-2M20 25v-3M22 25v-1" stroke="#3d73b5"/></svg></div>
    <div class="ms-auto d-flex align-items-center">
      <div class="tray-ic"><svg width="16" height="16" viewBox="0 0 16 16"><path d="M0 0h7v8H0z" fill="#e89a2c"/><path d="M7 0h8v8H7z" fill="#2a6fb6"/><path d="M0 8h8v8H0z" fill="#5aa037"/><path d="M8 8h7v8H8z" fill="#cf3a2a"/></svg></div>
      <div class="tray-ic"><svg width="10" height="16" viewBox="0 0 10 16"><path d="M3 0h4v2H3z" fill="#fff"/><path d="M.7 2h8.600v13.300H.7z" fill="#17434a" stroke="#fff" stroke-width="1.400"/><path d="M2 8h6v6H2z" fill="#fff"/></svg></div>
      <div class="tray-ic"><svg width="12" height="17" viewBox="0 0 12 17"><ellipse cx="6" cy="8.500" rx="6" ry="8.500" fill="#123f66"/><path d="M3 5l6 6-3 3V3l3 3-6 6" fill="none" stroke="#fff"/></svg></div>
      <div class="tray-ic"><svg width="16" height="16" viewBox="0 0 16 16"><path d="M0 5h3l4-4v13l-4-4H0z" fill="#fff"/><circle cx="11.500" cy="11.500" r="4" fill="#fff" stroke="#d8232a" stroke-width="1.800"/><path d="M9 9l5 5" stroke="#d8232a" stroke-width="1.800"/></svg></div>
      <div class="tray-ic"><svg width="16" height="12" viewBox="0 0 16 12"><path d="M0 9h2v3H0zM3.500 7h2v5h-2zM7 5h2v7H7zM10.500 3h2v9h-2zM14 0h2v12h-2z" fill="#fff"/></svg></div>
      <div class="tray-ic"><svg width="16" height="16" viewBox="0 0 16 16"><path d="M1 0v16" stroke="#fff" stroke-width="1.400"/><path d="M2 1c3-1 5 1 10 0v7c-4 1-7-1-10 0z" fill="#fff"/><circle cx="11" cy="11" r="4.500" fill="#d8232a"/><path d="M9 9l4 4M13 9l-4 4" stroke="#fff" stroke-width="1.200"/></svg></div>
      <div class="task-clock">01:45 p.m.<br>16/12/2018</div>
    </div>
  </div>
</div>
</body>
</html>
